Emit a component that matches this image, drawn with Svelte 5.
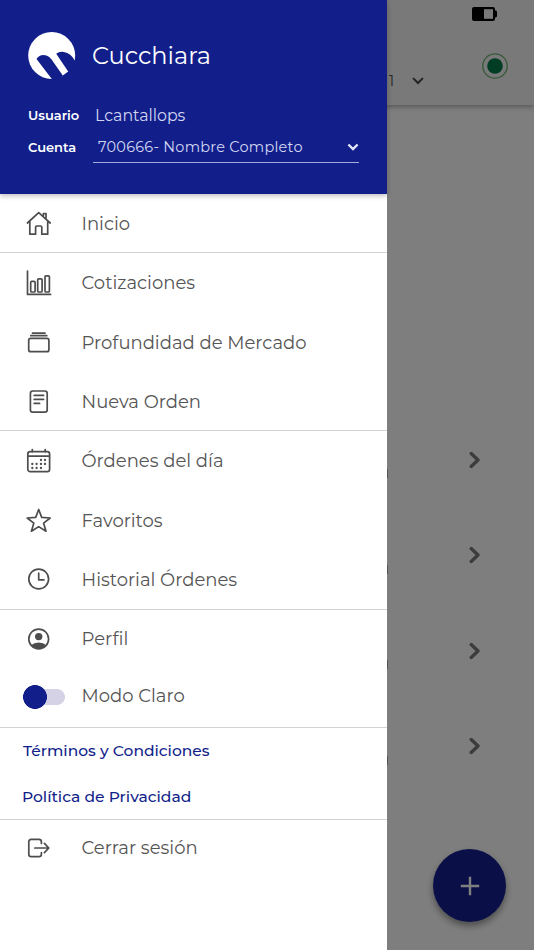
<script>
  let lightMode = $state(false)
  let current = $state('inicio')

  const groups = [
    [{ id: 'inicio', label: 'Inicio' }],
    [
      { id: 'cotizaciones', label: 'Cotizaciones' },
      { id: 'profundidad', label: 'Profundidad de Mercado' },
      { id: 'nueva', label: 'Nueva Orden' },
    ],
    [
      { id: 'ordenes', label: 'Órdenes del día' },
      { id: 'favoritos', label: 'Favoritos' },
      { id: 'historial', label: 'Historial Órdenes' },
    ],
  ]

  const rows = [1, 2, 3, 4]

  // [x, y] of the marked days in the calendar icon
  const days = [
    [15, 12], [19, 12],
    [6.3, 16], [10.6, 16], [15, 16], [19, 16],
    [6.3, 20], [10.6, 20], [15, 20],
  ]
</script>

{#snippet icon(id)}
  <svg class="icon" viewBox="0 0 26 26">
    {#if id === 'inicio'}
      <path d="M1.4 13 12.7 2.7 24.2 13M3.8 11.5V24.2H9.6V17.2Q9.6 16 10.8 16H14.6Q15.8 16 15.8 17.2V24.2H21.7V11.5M17.4 6V3.5H20V9" />
    {:else if id === 'cotizaciones'}
      <path d="M1.5 1V24.4H24.6" />
      <rect x="4.7" y="11.4" width="4.4" height="10.6" rx="1" />
      <rect x="11.7" y="8.8" width="4.4" height="13.2" rx="1" />
      <rect x="19" y="5.8" width="4.4" height="16.2" rx="1" />
    {:else if id === 'profundidad'}
      <path d="M6.5 4.2H19M4.8 6.7H20.8" />
      <rect x="2.7" y="9.3" width="20.2" height="13.4" rx="2" />
    {:else if id === 'nueva'}
      <rect x="4.4" y="3" width="16.8" height="21.2" rx="2.4" />
      <path d="M8.2 7.4H17.6M8.2 11.4H17.6M8.2 15.4H13.6" />
    {:else if id === 'ordenes'}
      <rect x="1.8" y="3.7" width="21.8" height="20" rx="2.4" />
      <path d="M2 8.1H23.4M6.3 1.6V3.7M19.2 1.6V3.7" />
      <g class="solid">
        {#each days as [x, y]}
          <circle cx={x} cy={y} r="1.15" />
        {/each}
      </g>
    {:else if id === 'favoritos'}
      <path d="M12.7 2.5 15.7 10.4 24.2 11 17.6 16.2 20 24.2 12.7 19.6 5.4 24.2 7.8 16.2 1.2 11 9.7 10.4Z" />
    {:else if id === 'historial'}
      <circle cx="12.7" cy="13" r="9.9" />
      <path d="M12.7 7.2V13.8H18" />
    {:else if id === 'perfil'}
      <circle cx="12.7" cy="13" r="9.9" />
      <g class="solid">
        <circle cx="12.7" cy="10.6" r="3.7" />
        <path d="M5 19.3Q8 16.6 12.7 16.6T20.4 19.3Q17.5 23 12.7 23T5 19.3Z" />
      </g>
    {:else if id === 'salir'}
      <path d="M15.4 8.4V6.8Q15.4 4.4 13 4.4H5.2Q2.8 4.4 2.8 6.8V19.2Q2.8 21.6 5.2 21.6H13Q15.4 21.6 15.4 19.2V17.6M8.8 13H22.6M18.4 8.4 22.8 13 18.4 17.6" />
    {/if}
  </svg>
{/snippet}

<div class="screen">
  <div class="app">
    <header class="topbar">
      <svg class="battery" viewBox="0 0 26 14">
        <rect x="0" y="0" width="23" height="14" rx="2" />
        <rect x="22" y="3.5" width="3" height="7" rx="1.4" />
        <rect class="empty" x="12" y="2.2" width="9" height="9.6" />
      </svg>
      <div class="status-row">
        <span class="count">1</span>
        <svg class="caret" viewBox="0 0 12 8"><path d="M1.6 1.6 6 6 10.4 1.6" /></svg>
        <svg class="online" viewBox="0 0 28 28">
          <circle class="ring" cx="14" cy="14" r="12.2" />
          <circle class="dot" cx="14" cy="14" r="7.8" />
        </svg>
      </div>
    </header>
    <div class="list">
      {#each rows as r (r)}
        <div class="list-row">
          <i class="edge"></i>
          <svg class="arrow" viewBox="0 0 12 18"><path d="M2.2 2.6 9 9 2.2 15.4" /></svg>
        </div>
      {/each}
    </div>
    <button class="fab" aria-label="Agregar">
      <svg viewBox="0 0 20 20"><path d="M10 .8V19.2M.8 10H19.2" /></svg>
    </button>
  </div>
  <div class="scrim"></div>

  <aside class="drawer">
    <div class="account">
      <div class="brand">
        <svg class="logo" viewBox="0 0 48 48">
          <circle cx="23.7" cy="23.5" r="23.5" />
          <path class="cut" d="M8.5 27Q12 21.5 18.5 23.4Q21.5 24.4 23.4 27.2L34.8 43.4 34 48H24.6Z" />
          <path class="cut" d="M34.8 43.4 40.2 39.6 28.2 21.8Q31 19.3 35.8 19.9Q43 21 46.8 28.6L48 30V48H34Z" />
        </svg>
        <span class="brand-name">Cucchiara</span>
      </div>
      <div class="field user">
        <span class="key">Usuario</span>
        <span class="value">Lcantallops</span>
      </div>
      <div class="field">
        <span class="key">Cuenta</span>
        <button class="select">
          <span>700666- Nombre Completo</span>
          <svg viewBox="0 0 12 8"><path d="M1.4 1.5 6 6 10.6 1.5" /></svg>
        </button>
      </div>
    </div>

    <nav>
      {#each groups as group}
        <div class="group">
          {#each group as item (item.id)}
            <button class="item" onclick={() => (current = item.id)} aria-current={item.id === current}>
              {@render icon(item.id)}
              <span>{item.label}</span>
            </button>
          {/each}
        </div>
      {/each}
      <div class="group profile">
        <button class="item">
          {@render icon('perfil')}
          <span>Perfil</span>
        </button>
        <button class="item mode" onclick={() => (lightMode = !lightMode)}>
          <i class="toggle" class:on={lightMode}></i>
          <span>Modo Claro</span>
        </button>
      </div>
      <div class="group links">
        <a class="terms" href="#terminos">Términos y Condiciones</a>
        <a href="#privacidad">Política de Privacidad</a>
      </div>
      <button class="item logout">
        {@render icon('salir')}
        <span>Cerrar sesión</span>
      </button>
    </nav>
  </aside>
</div>

<style>
  :global(body) { margin: 0; }

  .screen {
    position: relative;
    height: 950px;
    overflow: hidden;
    background: #fdfdfd;
    font-family: Montserrat, Inter, 'Open Sans', sans-serif;
  }
  svg { display: block; fill: none; flex: none; }
  button {
    border: none;
    background: none;
    padding: 0;
    font: inherit;
    color: inherit;
    cursor: pointer;
  }

  /* page under the drawer */
  .app { height: 100%; display: flex; flex-direction: column; }
  .topbar {
    height: 105px;
    box-sizing: border-box;
    padding: 7px 25px 0 389px;
    background: #f3f3f3;
    box-shadow: 0 2px 5px rgba(0, 0, 0, 0.3);
  }
  .battery { width: 26px; height: 14px; margin-left: 83px; fill: #000; }
  .battery .empty { fill: #f3f3f3; }
  .status-row { display: flex; align-items: flex-start; margin-top: 31px; }
  .count { width: 23px; margin-top: 22px; font-size: 14px; line-height: 14px; color: #444; }
  .caret {
    width: 12px;
    height: 8px;
    margin-top: 25px;
    stroke: #444;
    stroke-width: 2;
    stroke-linecap: round;
  }
  .online { width: 28px; height: 28px; margin-left: auto; }
  .ring { stroke: #68b070; stroke-width: 1.3; }
  .dot { fill: #007a48; }

  .list { padding-top: 307px; }
  .list-row {
    display: flex;
    align-items: center;
    height: 95.5px;
    padding-left: 387px;
  }
  .edge { width: 1px; height: 9px; margin: 28px 81px 0 0; background: #aaa; }
  .arrow {
    width: 12px;
    height: 18px;
    stroke: #787878;
    stroke-width: 3.4;
    stroke-linecap: round;
    stroke-linejoin: round;
  }

  .fab {
    position: absolute;
    right: 28px;
    bottom: 28px;
    width: 73px;
    height: 73px;
    border-radius: 50%;
    background: #14208e;
    display: grid;
    place-items: center;
    box-shadow: 0 4px 7px rgba(0, 0, 0, 0.4);
  }
  .fab svg { width: 20px; height: 20px; stroke: #fff; stroke-width: 2.4; }
  .scrim { position: absolute; inset: 0; background: rgba(0, 0, 0, 0.5); }

  .drawer {
    position: absolute;
    inset: 0 auto 0 0;
    width: 387px;
    background: #fff;
    color: #555;
  }

  .account {
    position: relative;
    height: 194px;
    box-sizing: border-box;
    padding: 32px 28px 0;
    background: #121f8b;
    color: #fff;
    box-shadow: 0 2px 5px rgba(0, 0, 0, 0.25);
  }
  .brand { display: flex; align-items: center; height: 47px; gap: 16px; }
  .logo { width: 48px; height: 48px; fill: #fff; }
  .logo .cut { fill: #121f8b; }
  .brand-name { font-size: 24px; }
  .field { display: flex; align-items: center; height: 31px; }
  .user { margin-top: 21px; }
  .key { width: 65px; font-size: 13px; font-weight: 600; }
  .user .key { padding-bottom: 1px; }
  .value { margin-left: 2px; font-size: 15.8px; color: #d3d7f2; }
  .select {
    flex: 1;
    height: 32px;
    display: flex;
    align-items: center;
    justify-content: space-between;
    padding: 2px 0 0 5px;
    border-bottom: 1px solid #a5abdc;
    font-size: 14.5px;
    letter-spacing: 0.24px;
    color: #d3d7f2;
  }
  .select svg { width: 12px; height: 8px; stroke: #e6e8fa; stroke-width: 2.4; }

  .group { border-bottom: 1px solid #d3d3d3; }
  .item {
    display: flex;
    align-items: center;
    width: 100%;
    height: 59px;
    padding-left: 26px;
    gap: 29.5px;
    font-size: 18px;
    text-align: left;
  }
  .item span { padding-top: 1px; }
  .item + .item span { padding-top: 2px; }
  .group:first-child .item, .profile .item { height: 58px; }
  .group:nth-child(3) .item { height: 59.33px; }
  .profile { padding-bottom: 2px; }
  .profile .mode { height: 57px; padding-left: 23px; gap: 16.5px; }
  .profile .mode span { padding: 0; }
  .icon {
    width: 26px;
    height: 26px;
    stroke: #4d4d4d;
    stroke-width: 1.7;
    stroke-linejoin: round;
    stroke-linecap: round;
  }
  .icon .solid { fill: #4d4d4d; stroke: none; }

  .toggle {
    width: 42px;
    height: 24px;
    margin-top: 1px;
    background:
      radial-gradient(circle at 12px 12px, #121f8b 11.6px, transparent 12.2px),
      linear-gradient(#d5d2e5, #d5d2e5) 10px 4px / 24px 16px no-repeat,
      radial-gradient(circle at 34px 12px, #d5d2e5 7.6px, transparent 8.2px);
  }
  .toggle.on { transform: scaleX(-1); }

  .links a {
    display: flex;
    align-items: center;
    height: 44px;
    padding: 2px 0 0 22px;
    font-size: 15.5px;
    font-weight: 500;
    color: #121f8b;
    text-decoration: none;
  }
  .links .terms { height: 44px; padding: 1px 0 0 23px; }
  .logout { height: 57px; }
  .logout span { padding: 0; }
</style>
